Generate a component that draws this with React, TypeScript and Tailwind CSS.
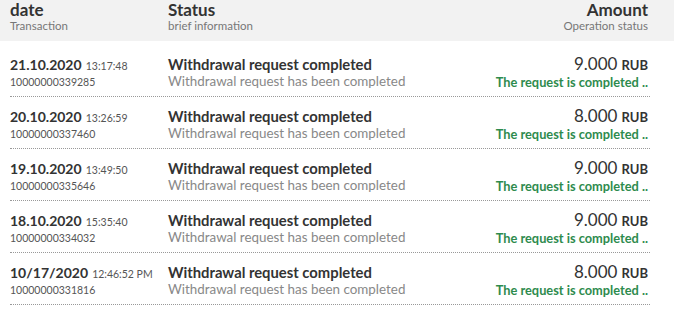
const rows = [
  { date: "21.10.2020", time: "13:17:48", id: "10000000339285", amount: "9.000" },
  { date: "20.10.2020", time: "13:26:59", id: "10000000337460", amount: "8.000" },
  { date: "19.10.2020", time: "13:49:50", id: "10000000335646", amount: "9.000" },
  { date: "18.10.2020", time: "15:35:40", id: "10000000334032", amount: "9.000" },
  { date: "10/17/2020", time: "12:46:52 PM", id: "10000000331816", amount: "8.000" },
]

export default function App() {
  return (
    <div className="w-[674px] h-[311px] bg-white overflow-hidden font-['Lato',sans-serif]">
      {/* Header */}
      <div className="h-[41px] bg-[#f2f2f2] flex pl-[10px] pr-[26px]">
        <div className="w-[158px] flex flex-col">
          <span className="text-[17px] leading-[19px] font-bold text-[#333]">date</span>
          <span className="text-[11.5px] leading-[13px] text-[#777]">Transaction</span>
        </div>
        <div className="flex-1 flex flex-col">
          <span className="text-[17px] leading-[19px] font-bold text-[#333]">Status</span>
          <span className="text-[11.5px] leading-[13px] text-[#777]">brief information</span>
        </div>
        <div className="flex flex-col items-end">
          <span className="text-[17px] leading-[19px] font-bold text-[#333]">Amount</span>
          <span className="text-[11.5px] leading-[13px] text-[#777]">Operation status</span>
        </div>
      </div>

      {/* Rows */}
      <div className="ml-[10px] w-[640px] mt-[4px]">
        {rows.map((r) => (
          <div
            key={r.id}
            className="h-[52px] flex pt-[10px] pr-[2px] border-b border-dotted border-[#999]"
          >
            <div className="w-[158px] flex flex-col">
              <div className="leading-[18px] whitespace-nowrap">
                <span className="text-[14px] font-bold text-[#333]">{r.date}</span>{" "}
                <span className="text-[10.5px] text-[#555]">{r.time}</span>
              </div>
              <span className="text-[10.5px] leading-[14px] text-[#555]">{r.id}</span>
            </div>
            <div className="flex-1 flex flex-col">
              <span className="text-[14.8px] leading-[18px] font-bold text-[#333]">
                Withdrawal request completed
              </span>
              <span className="text-[13.4px] leading-[17px] text-[#888]">
                Withdrawal request has been completed
              </span>
            </div>
            <div className="flex flex-col items-end">
              <div className="leading-[18px] whitespace-nowrap">
                <span className="text-[17px] text-[#333]">{r.amount}</span>{" "}
                <span className="text-[13px] font-bold text-[#333]">RUB</span>
              </div>
              <span className="text-[12.8px] leading-[17px] font-bold text-[#2e8b4e]">
                The request is completed ..
              </span>
            </div>
          </div>
        ))}
      </div>
    </div>
  )
}
